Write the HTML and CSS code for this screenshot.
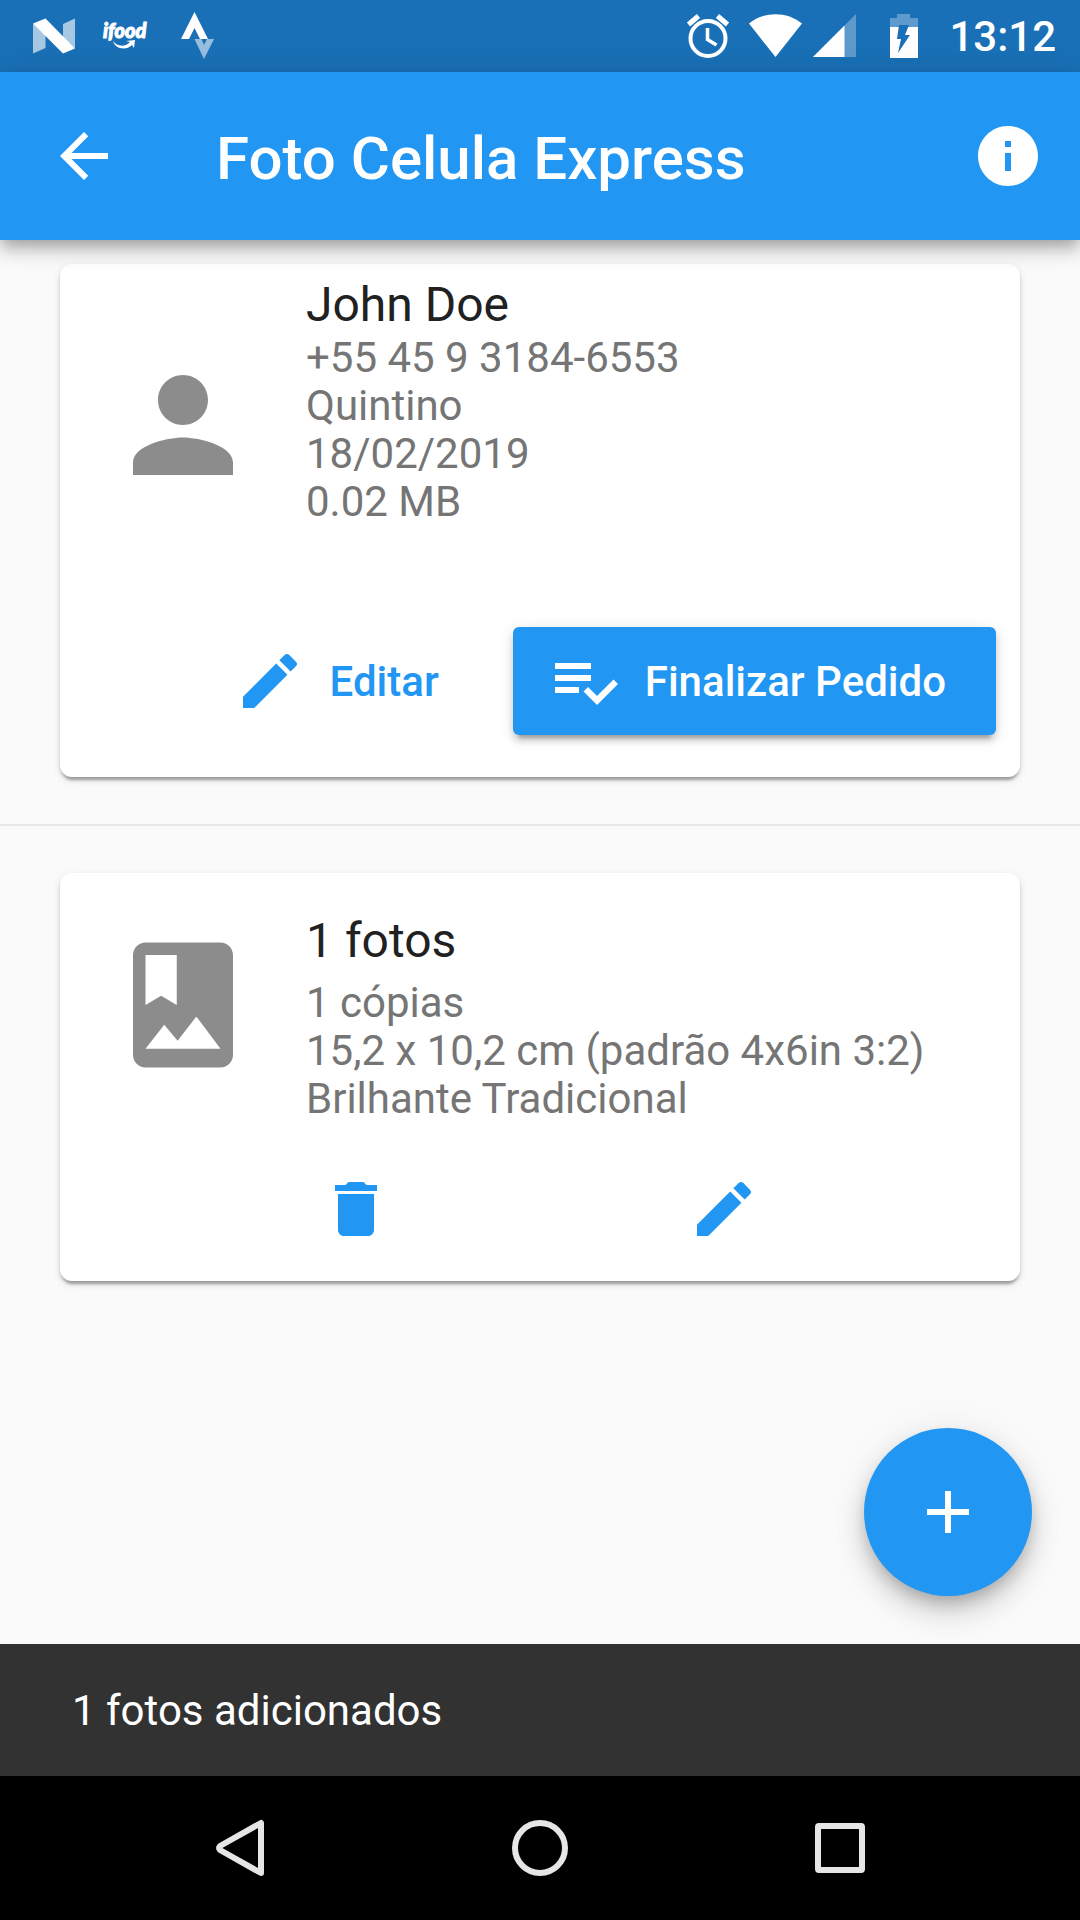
FILE: index.html
```html
<!DOCTYPE html>
<html lang="pt-BR">
<head>
<meta charset="utf-8">
<meta name="viewport" content="width=device-width">
<title>Foto Celula Express</title>
<link rel="stylesheet" href="styles.css">
</head>
<body>
<div class="status-bar">
  <div class="status-group status-notifications">
    <svg class="status-icon" viewBox="0 0 48 48" aria-hidden="true"><path fill="#fff" fill-opacity=".62" d="M3 12 15.500 17v19L3 41.500zM33 12l12-5.500v30l-12-10z"/><path fill="#fff" d="M3 11.500 15.500 6.500 45 36.500 33 41.500z"/></svg>
    <svg class="status-icon" viewBox="0 0 48 48" role="img" aria-label="ifood"><text class="logo-text" x="1" y="26">ifood</text><path fill="#fff" d="M11 29c4 6 13 6 17 1l-4-1 9-1-1 8-2-3c-6 6-17 4-19-4z"/></svg>
    <svg class="status-icon" viewBox="0 0 48 48" aria-hidden="true"><path fill="#fff" d="M7 27 20.500 0 34 27h-8l-5.500-11L15 27z"/><path fill="#fff" fill-opacity=".55" d="M20.500 27h7l2.500 6 3-6h7L30 47z"/></svg>
  </div>
  <div class="status-group status-system">
    <svg class="status-icon" viewBox="0 0 48 48" aria-hidden="true"><g fill="none" stroke="#fff"><circle cx="24" cy="26.500" r="17.500" stroke-width="4"/><path stroke-width="3.500" d="M23.500 16v11.500l9 5.500"/><path stroke-width="5" d="m4.500 12.500 10-8.500M43.500 12.500 33.500 4"/></g></svg>
    <svg class="status-icon status-icon-wifi" viewBox="-9 0 63 48" aria-hidden="true"><path fill="#fff" d="M0 11.500C15-1 38-1 53 11.500L26.500 45z"/></svg>
    <svg class="status-icon" viewBox="0 0 48 48" aria-hidden="true"><path fill="#fff" fill-opacity=".3" d="M2 45 45 2v43z"/><path fill="#fff" d="M2 45 33.500 13.500V45z"/></svg>
    <svg class="status-icon status-icon-battery" viewBox="0 0 28 48" aria-hidden="true"><path fill="#fff" fill-opacity=".3" d="M7 2h13v4h8v9H0V6h7z"/><path fill="#fff" d="M0 15h28v31H0z"/><path fill="#1970b6" d="M9 13h10l-4 10h5L8 41l3-14H7z"/></svg>
    <time class="clock">13:12</time>
  </div>
</div>
<header class="app-bar">
  <button class="icon-button" type="button" aria-label="Voltar"><svg class="icon" viewBox="0 0 24 24"><path d="M20 11H7.830l5.590-5.590L12 4l-8 8 8 8 1.410-1.410L7.830 13H20z"/></svg></button>
  <h1 class="title">Foto Celula Express</h1>
  <button class="icon-button" type="button" aria-label="Informações"><svg class="icon" viewBox="0 0 24 24"><path d="M12 2C6.480 2 2 6.480 2 12s4.480 10 10 10 10-4.480 10-10S17.520 2 12 2zm1 15h-2v-6h2zm0-8h-2V7h2z"/></svg></button>
</header>
<main class="content">
  <section class="card">
    <div class="tile tile-order">
      <svg class="tile-icon" viewBox="0 0 24 24" aria-hidden="true"><path d="M12 12c2.210 0 4-1.790 4-4s-1.790-4-4-4-4 1.790-4 4 1.790 4 4 4zm0 2c-2.670 0-8 1.340-8 4v2h16v-2c0-2.660-5.330-4-8-4z"/></svg>
      <div class="tile-text">
        <h2 class="tile-title">John Doe</h2>
        <p class="tile-line">+55 45 9 3184-6553</p>
        <p class="tile-line">Quintino</p>
        <p class="tile-line">18/02/2019</p>
        <p class="tile-line">0.02 MB</p>
      </div>
    </div>
    <div class="order-actions">
      <button class="button" type="button"><svg class="icon" viewBox="0 0 24 24" aria-hidden="true"><path d="M3 17.250V21h3.750L17.810 9.940l-3.750-3.750zM20.710 7.040c.39-.39.39-1.020 0-1.410l-2.340-2.340c-.39-.39-1.020-.39-1.410 0l-1.830 1.830 3.750 3.750z"/></svg><span class="button-label">Editar</span></button>
      <button class="button button-raised" type="button"><svg class="icon" viewBox="0 0 24 24" aria-hidden="true"><path d="M14 10H2v2h12zm0-4H2v2h12zM2 16h8v-2H2zm19.500-4.500L23 13l-6.990 7-4.510-4.500L13 14l3.010 3z"/></svg><span class="button-label">Finalizar Pedido</span></button>
    </div>
  </section>
  <hr class="divider">
  <section class="card">
    <div class="tile tile-photos">
      <svg class="tile-icon" viewBox="0 0 24 24" aria-hidden="true"><path d="M18 2H6c-1.100 0-2 .9-2 2v16c0 1.100.9 2 2 2h12c1.100 0 2-.9 2-2V4c0-1.100-.9-2-2-2zM6 4h5v8l-2.500-1.500L6 12zm0 15 3-3.860 2.140 2.580 3-3.860L18 19z"/></svg>
      <div class="tile-text">
        <h2 class="tile-title">1 fotos</h2>
        <p class="tile-line">1 cópias</p>
        <p class="tile-line">15,2 x 10,2 cm (padrão 4x6in 3:2)</p>
        <p class="tile-line">Brilhante Tradicional</p>
      </div>
    </div>
    <div class="photo-actions">
      <button class="icon-button" type="button" aria-label="Excluir"><svg class="icon" viewBox="0 0 24 24"><path d="M6 19c0 1.100.9 2 2 2h8c1.100 0 2-.9 2-2V7H6zM19 4h-3.500l-1-1h-5l-1 1H5v2h14z"/></svg></button>
      <button class="icon-button" type="button" aria-label="Editar fotos"><svg class="icon" viewBox="0 0 24 24"><path d="M3 17.250V21h3.750L17.810 9.940l-3.750-3.750zM20.710 7.040c.39-.39.39-1.020 0-1.410l-2.340-2.340c-.39-.39-1.020-.39-1.410 0l-1.830 1.830 3.750 3.750z"/></svg></button>
    </div>
  </section>
  <button class="fab" type="button" aria-label="Adicionar"><svg class="icon" viewBox="0 0 24 24"><path d="M19 13h-6v6h-2v-6H5v-2h6V5h2v6h6z"/></svg></button>
</main>
<div class="snackbar" role="status">1 fotos adicionados</div>
<nav class="nav-bar" aria-label="Sistema">
  <button class="nav-button" type="button" aria-label="Voltar"><svg class="nav-icon" viewBox="0 0 72 72"><path d="M57 11v50L16 38q-2-2 0-4z"/></svg></button>
  <button class="nav-button" type="button" aria-label="Início"><svg class="nav-icon" viewBox="0 0 72 72"><circle cx="36" cy="36" r="25"/></svg></button>
  <button class="nav-button" type="button" aria-label="Recentes"><svg class="nav-icon" viewBox="0 0 72 72"><rect x="14" y="14" width="44" height="44" rx="1"/></svg></button>
</nav>
</body>
</html>
```
FILE: styles.css
```css
* {
  box-sizing: border-box;
}

body {
  --blue: #2196f3;
  display: flex;
  flex-direction: column;
  min-height: 100vh;
  margin: 0;
  background: #fafafa;
  color: #212121;
  font-family: Roboto, sans-serif;
  font-size: 42px;
  line-height: 48px;
}

h1,
h2,
p {
  margin: 0;
}

button {
  padding: 0;
  border: 0;
  background: none;
  color: inherit;
  font: inherit;
  cursor: pointer;
}

.icon {
  display: block;
  flex: none;
  width: 72px;
  height: 72px;
  fill: currentColor;
}

.status-bar {
  display: flex;
  justify-content: space-between;
  height: 72px;
  padding: 0 24px 0 30px;
  background: #1970b6;
  color: #fff;
}

.status-group {
  display: flex;
  align-items: center;
}

.status-notifications {
  gap: 24px;
}

.status-system {
  gap: 8px;
}

.status-icon {
  flex: none;
  width: 48px;
  height: 48px;
}

.status-icon-wifi {
  width: 63px;
}

.status-icon-battery {
  width: 28px;
  margin: 0 23px;
}

.logo-text {
  fill: #fff;
  stroke: #fff;
  stroke-width: 1px;
  font: italic 900 20px Lato, sans-serif;
}

.clock {
  padding-top: 2px;
  font-weight: 500;
}

.app-bar {
  z-index: 1;
  display: flex;
  align-items: center;
  height: 168px;
  padding: 0 0 0 12px;
  background: var(--blue);
  box-shadow: 0 6px 12px -3px rgba(0, 0, 0, 0.2), 0 12px 15px rgba(0, 0, 0, 0.14), 0 3px 30px rgba(0, 0, 0, 0.12);
  color: #fff;
}

.icon-button {
  display: grid;
  place-items: center;
  flex: none;
  width: 144px;
  height: 144px;
}

.title {
  flex: 1;
  padding: 6px 0 0 60px;
  font-size: 60px;
  font-weight: 500;
  line-height: 70px;
}

.content {
  position: relative;
  flex: 1;
  padding: 24px 0 363px;
}

.card {
  margin: 0 60px;
  border-radius: 12px;
  background: #fff;
  box-shadow: 0 6px 3px -3px rgba(0, 0, 0, 0.2), 0 3px 3px rgba(0, 0, 0, 0.14), 0 3px 9px rgba(0, 0, 0, 0.12);
}

.tile {
  display: flex;
  align-items: center;
  gap: 48px;
  padding: 0 48px;
}

.tile-icon {
  flex: none;
  width: 150px;
  height: 150px;
  fill: #8c8c8c;
}

.tile-order .tile-text {
  padding: 12px 0 59px;
}

.tile-photos .tile-text {
  padding: 39px 0 14px;
}

.tile-title {
  margin-bottom: 1px;
  font-size: 48px;
  font-weight: 400;
  line-height: 57px;
}

.tile-photos .tile-title {
  margin-bottom: 10px;
}

.tile-line {
  color: #757575;
}

.order-actions {
  display: flex;
  justify-content: flex-end;
  gap: 24px;
  padding: 42px 24px;
}

.button {
  display: flex;
  align-items: center;
  gap: 24px;
  height: 108px;
  padding: 0 50px 0 36px;
  border-radius: 6px;
  color: var(--blue);
  font-weight: 500;
}

.button-label {
  padding-top: 2px;
}

.button-raised {
  background: var(--blue);
  box-shadow: 0 9px 3px -6px rgba(0, 0, 0, 0.2), 0 6px 6px rgba(0, 0, 0, 0.14), 0 3px 15px rgba(0, 0, 0, 0.12);
  color: #fff;
}

.divider {
  height: 2px;
  margin: 47px 0;
  border: 0;
  background: #e8e8e8;
}

.photo-actions {
  display: flex;
  justify-content: space-evenly;
  color: var(--blue);
}

.fab {
  position: absolute;
  right: 48px;
  bottom: 48px;
  display: grid;
  place-items: center;
  width: 168px;
  height: 168px;
  border-radius: 50%;
  background: var(--blue);
  box-shadow: 0 9px 15px -3px rgba(0, 0, 0, 0.2), 0 18px 30px rgba(0, 0, 0, 0.14), 0 3px 36px rgba(0, 0, 0, 0.08);
  color: #fff;
}

.snackbar {
  padding: 43px 72px 41px;
  background: #323232;
  color: #fff;
}

.nav-bar {
  display: grid;
  grid-template-columns: repeat(3, 300px);
  justify-content: center;
  height: 144px;
  background: #000;
}

.nav-button {
  display: grid;
  place-items: center;
}

.nav-icon {
  width: 72px;
  height: 72px;
  fill: none;
  stroke: #e6e6e6;
  stroke-width: 6;
  stroke-linejoin: round;
}
```
